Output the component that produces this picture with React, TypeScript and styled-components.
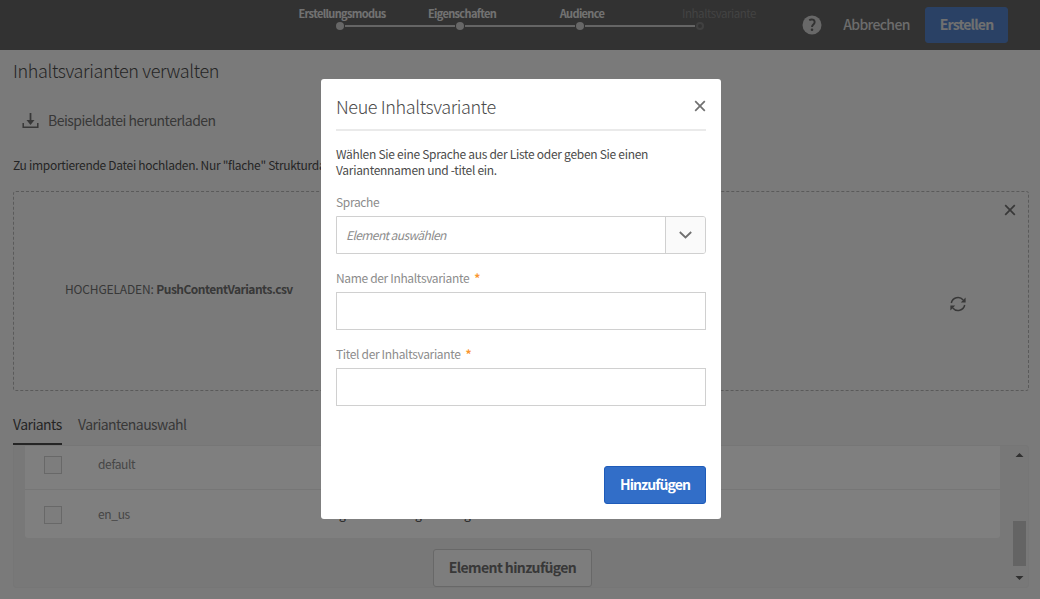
import React from 'react';
import styled, { createGlobalStyle, css } from 'styled-components';

const GlobalStyle = createGlobalStyle`
  * { box-sizing: border-box; }
  body {
    margin: 0;
    background: #f5f5f5;
    color: #4b4b4b;
    font-family: 'Noto Sans CJK SC', 'Noto Sans', sans-serif;
    font-size: 12px;
    overflow: hidden;
  }
  button, input { font: inherit; color: inherit; }
`;

const Page = styled.div`
  display: flex;
  flex-direction: column;
  height: 599px;
  width: 1040px;
  background: #f5f5f5;
`;

const Header = styled.header`
  display: grid;
  grid-template-columns: 280px 480px 1fr;
  height: 50px;
  background: #646464;
`;

const Steps = styled.ol`
  grid-column: 2;
  display: grid;
  grid-template-columns: repeat(4, 120px);
  margin: 0;
  padding: 5px 0 0;
  list-style: none;
`;

const Step = styled.li<{ $pending?: boolean }>`
  display: flex;
  flex-direction: column;
  align-items: center;
  white-space: nowrap;
  font-size: ${(p) => (p.$pending ? 11.5 : 11)}px;
  line-height: 16px;
  letter-spacing: ${(p) => (p.$pending ? -0.45 : -0.65)}px;
  font-weight: ${(p) => (p.$pending ? 400 : 700)};
  color: ${(p) => (p.$pending ? '#868686' : '#e4e4e4')};
`;

const StepLabel = styled.span<{ $pending?: boolean }>`
  padding-left: ${(p) => (p.$pending ? 38 : 4)}px;
`;

const Track = styled.div`
  display: grid;
  grid-template-columns: 55px 10px 55px;
  align-items: center;
  justify-items: center;
  width: 120px;
  height: 10px;
`;

const Segment = styled.span<{ $on: boolean }>`
  width: 55px;
  height: 2px;
  background: ${(p) => (p.$on ? '#cacaca' : 'transparent')};
`;

const Dot = styled.span<{ $pending?: boolean }>`
  width: 8px;
  height: 8px;
  border-radius: 50%;
  ${(p) =>
    p.$pending
      ? css`border: 2px solid #808080;`
      : css`background: #cecece;`}
`;

const HeaderActions = styled.div`
  grid-column: 3;
  display: flex;
  align-items: center;
  justify-content: flex-end;
  padding-right: 32px;
`;

const HelpBadge = styled.svg`
  width: 20px;
  height: 20px;
  margin-right: 21px;
`;

const TextButton = styled.button`
  width: 67px;
  padding: 0 0 2px;
  border: 0;
  background: none;
  color: #d8d8d8;
  font-size: 14px;
  font-weight: 500;
  letter-spacing: -0.65px;
  white-space: nowrap;
`;

const PrimaryButton = styled.button<{ $w: number; $h: number }>`
  width: ${(p) => p.$w}px;
  height: ${(p) => p.$h}px;
  padding: 0 0 2px;
  border: 1px solid #1e5bb9;
  border-radius: 3px;
  background: #326ec8;
  color: #fff;
  font-size: 14px;
  font-weight: 700;
  letter-spacing: -0.9px;
  white-space: nowrap;
`;

const CreateButton = styled(PrimaryButton)`
  margin-left: 15px;
  border-color: #5583ca;
  background: #5583ca;
  color: #e0e0e0;
  letter-spacing: -0.8px;
`;

const Main = styled.main`
  display: flex;
  flex-direction: column;
  padding: 0 11px 0 13px;
`;

const Title = styled.h1`
  margin: 7px 0 0;
  font-size: 18px;
  font-weight: 300;
  line-height: 27px;
  letter-spacing: -0.36px;
`;

const Download = styled.button`
  display: flex;
  align-items: center;
  gap: 9px;
  height: 20px;
  margin: 26px 0 0 9px;
  padding: 0;
  border: 0;
  background: none;
  color: #707070;
  font-size: 14px;
  letter-spacing: -0.52px;
  white-space: nowrap;
`;

const Hint = styled.p`
  margin: 27px 0 0;
  line-height: 16px;
  font-size: 12px;
  letter-spacing: -0.3px;
  white-space: nowrap;
`;

const DropZone = styled.section`
  display: grid;
  grid-template-columns: 1fr 180px;
  height: 200px;
  margin-top: 18px;
  border: 1px dashed #b4b4b4;
  border-radius: 3px;
`;

const Uploaded = styled.p`
  align-self: center;
  margin: 0 0 6px 51px;
  color: #707070;
  font-size: 12px;
  letter-spacing: -0.15px;

  b { letter-spacing: -0.52px; }
`;

const ZoneTools = styled.div`
  display: flex;
  flex-direction: column;
  padding: 12px 12px 0 0;
  align-items: flex-end;

  svg + svg { margin: 80px 50px 0 0; }
`;

const Tabs = styled.nav`
  display: flex;
  gap: 16px;
  height: 35px;
  margin-top: 19px;
`;

const Tab = styled.span<{ $active?: boolean; $w: number }>`
  width: ${(p) => p.$w}px;
  line-height: 29px;
  font-size: 14px;
  letter-spacing: -0.54px;
  white-space: nowrap;
  color: ${(p) => (p.$active ? '#4b4b4b' : '#707070')};
  border-bottom: ${(p) => (p.$active ? '2px solid #4b4b4b' : '0')};
`;

const Panel = styled.section`
  display: grid;
  grid-template-columns: 1fr 17px;
  column-gap: 10px;
  height: 143px;
  padding: 0 0 0 11px;
  border: 1px solid #ededed;
  border-radius: 3px;
  background: #f0f0f0;
`;

const List = styled.div`
  display: flex;
  flex-direction: column;
  padding-right: 1px;
`;

const Row = styled.div<{ $h: number; $bottom?: number; $top?: number }>`
  display: grid;
  grid-template-columns: 54px 241px 1fr;
  align-items: center;
  flex: none;
  height: ${(p) => p.$h}px;
  padding: ${(p) => p.$top ?? 0}px 0 ${(p) => p.$bottom ?? 0}px 19px;
  background: #fefefe;
  color: #8c8c8c;
  & + & {
    border-top: 1px solid #ededed;
    border-radius: 0 0 3px 3px;
  }
`;

const Checkbox = styled.span`
  width: 18px;
  height: 18px;
  border: 1px solid #d0d0d0;
  background: #fbfbfb;
`;

const Variant = styled.span`
  padding-bottom: 3px;
  font-size: 12px;
  letter-spacing: -0.35px;
`;

const VariantTitle = styled.span`
  display: grid;
  grid-template-columns: 76px 49px 10px;
  padding-bottom: 3px;
  font-size: 12px;
  color: #4b4b4b;
`;

const AddButton = styled.button`
  align-self: center;
  width: 159px;
  height: 38px;
  margin: 11px 0 0 0;
  padding: 0 0 2px;
  border: 1px solid #d0d0d0;
  border-radius: 3px;
  background: #fafafa;
  color: #707070;
  font-size: 14px;
  font-weight: 700;
  letter-spacing: -0.6px;
  white-space: nowrap;
`;

const Scrollbar = styled.svg`
  width: 17px;
  height: 141px;
`;

const Backdrop = styled.div`
  position: absolute;
  top: 0;
  left: 0;
  width: 1040px;
  height: 599px;
  padding: 79px 0 0 321px;
  background: rgba(0, 0, 0, 0.5);
`;

const Dialog = styled.div`
  display: flex;
  flex-direction: column;
  width: 400px;
  height: 440px;
  padding: 0 15px 15px;
  border-radius: 3px;
  background: #fff;
`;

const DialogHeader = styled.div`
  display: flex;
  align-items: center;
  justify-content: space-between;
  height: 52px;
  padding-top: 4px;
  border-bottom: 2px solid #eaeaea;
`;

const DialogTitle = styled.h2`
  margin: 0;
  font-size: 18px;
  font-weight: 300;
  letter-spacing: -0.38px;
`;

const Intro = styled.p`
  margin: 15px 0 0;
  font-size: 12px;
  line-height: 16px;
  letter-spacing: -0.29px;
  white-space: nowrap;
`;

const Field = styled.label`
  display: block;
  height: 76px;
  color: #8c8c8c;
  font-size: 12px;
  line-height: 16px;
  letter-spacing: -0.34px;
`;

const Fields = styled.div`
  padding-top: 16px;
`;

const Required = styled.span`
  margin-left: 5px;
  color: #fa962f;
  font-weight: 700;
`;

const TextInput = styled.input`
  display: block;
  width: 370px;
  height: 38px;
  margin-top: 6px;
  border: 1px solid #d0d0d0;
  background: #fff;
`;

const Select = styled.div`
  display: grid;
  grid-template-columns: 1fr 40px;
  height: 38px;
  margin-top: 6px;
  border: 1px solid #d0d0d0;
  border-radius: 0 3px 3px 0;
  line-height: 36px;
  font-style: italic;
  letter-spacing: -0.6px;
  padding-left: 9px;
`;

const SelectToggle = styled.span`
  display: flex;
  align-items: center;
  justify-content: center;
  border-left: 1px solid #d0d0d0;
  border-radius: 0 2px 2px 0;
  background: #fafafa;
`;

const DialogFooter = styled.div`
  display: flex;
  justify-content: flex-end;
  margin-top: auto;
`;

const CloseIcon = ({ color = '#707070' }: { color?: string }) => (
  <svg width="12" height="12" viewBox="0 0 12 12" fill="none" stroke={color} strokeWidth="1.7">
    <path d="M1.2 1.2l9.6 9.6M10.8 1.2L1.2 10.8" />
  </svg>
);

const steps = ['Erstellungsmodus', 'Eigenschaften', 'Audience', 'Inhaltsvariante'];

export default function App() {
  return (
    <>
      <GlobalStyle />
      <Page>
        <Header>
          <Steps>
            {steps.map((name, i) => (
              <Step key={name} $pending={i === 3}>
                <StepLabel $pending={i === 3}>{name}</StepLabel>
                <Track>
                  <Segment $on={i > 0} />
                  <Dot $pending={i === 3} />
                  <Segment $on={i < 3} />
                </Track>
              </Step>
            ))}
          </Steps>
          <HeaderActions>
            <HelpBadge viewBox="0 0 20 20">
              <circle cx="10" cy="10" r="9.5" fill="#d0d0d0" />
              <path d="M7.2 5.2C9.5 3.8 13 4.5 12.6 7.5C12.3 9.6 10 9.4 10 12" fill="none" stroke="#646464" strokeWidth="1.9" />
              <circle cx="10" cy="14.7" r="1.3" fill="#646464" />
            </HelpBadge>
            <TextButton>Abbrechen</TextButton>
            <CreateButton $w={83} $h={36}>Erstellen</CreateButton>
          </HeaderActions>
        </Header>
        <Main>
          <Title>Inhaltsvarianten verwalten</Title>
          <Download>
            <svg width="17" height="17" viewBox="0 0 17 17" fill="none" stroke="#707070">
              <path d="M1.2 11V15.2H15.8V11" strokeWidth="1.5" />
              <path d="M8.5 1V9" strokeWidth="1.8" />
              <path d="M4.5 8H12.5L8.5 13Z" fill="#707070" stroke="none" />
            </svg>
            Beispieldatei herunterladen
          </Download>
          <Hint>Zu importierende Datei hochladen. Nur "flache" Strukturda</Hint>
          <DropZone>
            <Uploaded>HOCHGELADEN: <b>PushContentVariants.csv</b></Uploaded>
            <ZoneTools>
              <CloseIcon />
              <svg width="16" height="16" viewBox="0 0 16 16" fill="none" stroke="#707070" strokeWidth="1.5">
                <path d="M1.3 7A6.8 6.8 0 0 1 13.2 4" />
                <path d="M14.7 9A6.8 6.8 0 0 1 2.8 12" />
                <path d="M15.6 1.6V6.4H10.8Z" fill="#707070" stroke="none" />
                <path d="M.4 14.4V9.6H5.2Z" fill="#707070" stroke="none" />
              </svg>
            </ZoneTools>
          </DropZone>
          <Tabs>
            <Tab $active $w={49}>Variants</Tab>
            <Tab $w={109}>Variantenauswahl</Tab>
          </Tabs>
          <Panel>
            <List>
              <Row $h={43} $bottom={6}>
                <Checkbox />
                <Variant>default</Variant>
              </Row>
              <Row $h={49} $top={1}>
                <Checkbox />
                <Variant>en_us</Variant>
                <VariantTitle>
                  <span>g</span>
                  <span>g</span>
                  <span>g</span>
                </VariantTitle>
              </Row>
              <AddButton>Element hinzufügen</AddButton>
            </List>
            <Scrollbar viewBox="0 0 17 141">
              <path d="M4.5 11h8L8.5 7zM4.5 130h8l-4 4z" fill="#606060" />
              <rect x="2" y="75" width="13" height="45" fill="#c8c8c8" />
            </Scrollbar>
          </Panel>
        </Main>
      </Page>
      <Backdrop>
        <Dialog>
          <DialogHeader>
            <DialogTitle>Neue Inhaltsvariante</DialogTitle>
            <CloseIcon />
          </DialogHeader>
          <Intro>
            Wählen Sie eine Sprache aus der Liste oder geben Sie einen
            <br />
            Variantennamen und -titel ein.
          </Intro>
          <Fields>
            <Field as="div">
              Sprache
              <Select>
                Element auswählen
                <SelectToggle>
                  <svg width="13" height="8" viewBox="0 0 13 8" fill="none" stroke="#707070" strokeWidth="1.8">
                    <path d="M.8 1L6.5 6.5L12.2 1" />
                  </svg>
                </SelectToggle>
              </Select>
            </Field>
            <Field>
              Name der Inhaltsvariante<Required>*</Required>
              <TextInput />
            </Field>
            <Field>
              Titel der Inhaltsvariante<Required>*</Required>
              <TextInput />
            </Field>
          </Fields>
          <DialogFooter>
            <PrimaryButton $w={102} $h={38}>Hinzufügen</PrimaryButton>
          </DialogFooter>
        </Dialog>
      </Backdrop>
    </>
  );
}
